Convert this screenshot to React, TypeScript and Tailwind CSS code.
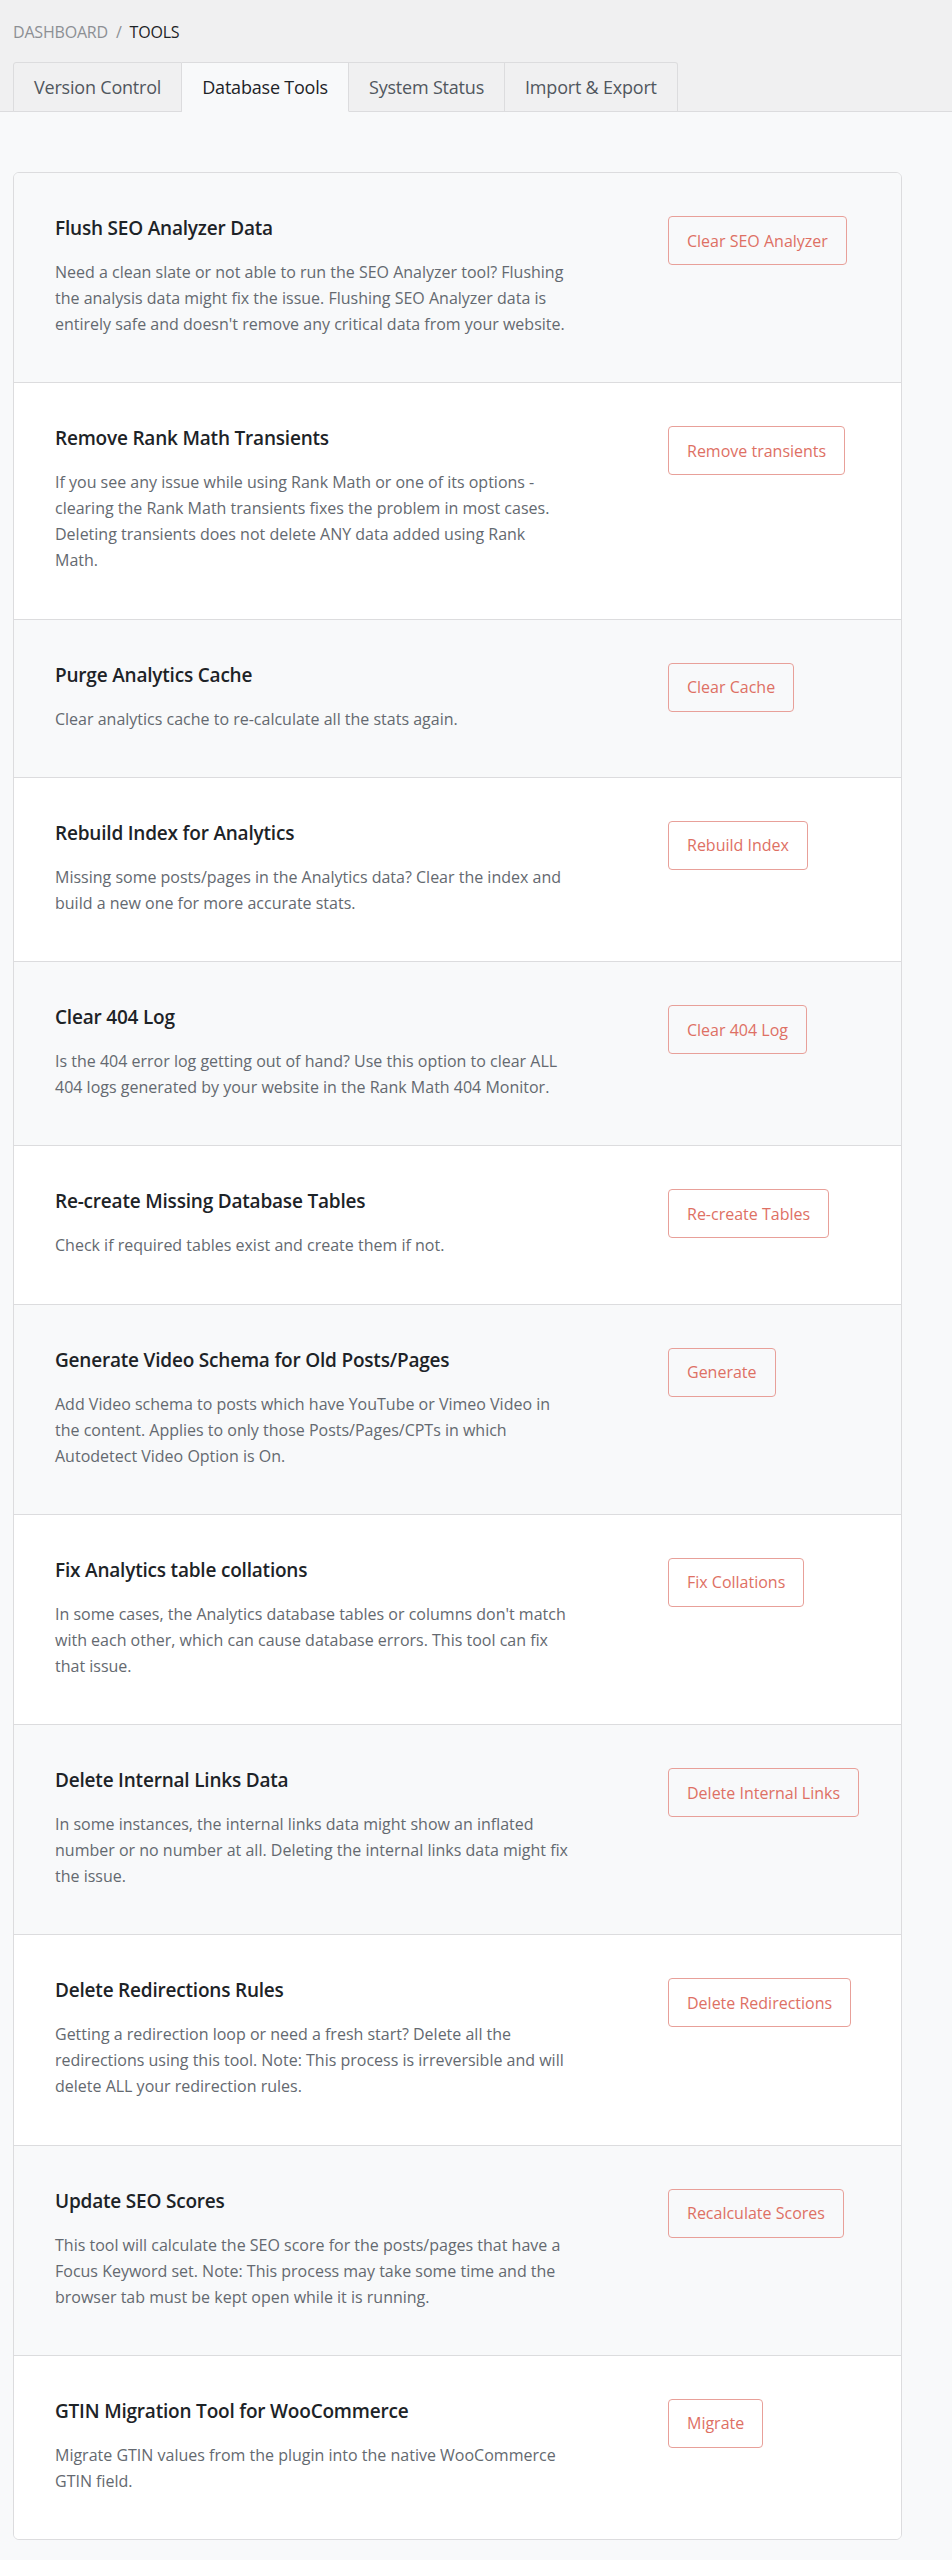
import React from "react";

type Tool = { title: string; lines: string[]; button: string };

const tools: Tool[] = [
  {
    title: "Flush SEO Analyzer Data",
    lines: [
      "Need a clean slate or not able to run the SEO Analyzer tool? Flushing",
      "the analysis data might fix the issue. Flushing SEO Analyzer data is",
      "entirely safe and doesn't remove any critical data from your website.",
    ],
    button: "Clear SEO Analyzer",
  },
  {
    title: "Remove Rank Math Transients",
    lines: [
      "If you see any issue while using Rank Math or one of its options -",
      "clearing the Rank Math transients fixes the problem in most cases.",
      "Deleting transients does not delete ANY data added using Rank",
      "Math.",
    ],
    button: "Remove transients",
  },
  {
    title: "Purge Analytics Cache",
    lines: ["Clear analytics cache to re-calculate all the stats again."],
    button: "Clear Cache",
  },
  {
    title: "Rebuild Index for Analytics",
    lines: [
      "Missing some posts/pages in the Analytics data? Clear the index and",
      "build a new one for more accurate stats.",
    ],
    button: "Rebuild Index",
  },
  {
    title: "Clear 404 Log",
    lines: [
      "Is the 404 error log getting out of hand? Use this option to clear ALL",
      "404 logs generated by your website in the Rank Math 404 Monitor.",
    ],
    button: "Clear 404 Log",
  },
  {
    title: "Re-create Missing Database Tables",
    lines: ["Check if required tables exist and create them if not."],
    button: "Re-create Tables",
  },
  {
    title: "Generate Video Schema for Old Posts/Pages",
    lines: [
      "Add Video schema to posts which have YouTube or Vimeo Video in",
      "the content. Applies to only those Posts/Pages/CPTs in which",
      "Autodetect Video Option is On.",
    ],
    button: "Generate",
  },
  {
    title: "Fix Analytics table collations",
    lines: [
      "In some cases, the Analytics database tables or columns don't match",
      "with each other, which can cause database errors. This tool can fix",
      "that issue.",
    ],
    button: "Fix Collations",
  },
  {
    title: "Delete Internal Links Data",
    lines: [
      "In some instances, the internal links data might show an inflated",
      "number or no number at all. Deleting the internal links data might fix",
      "the issue.",
    ],
    button: "Delete Internal Links",
  },
  {
    title: "Delete Redirections Rules",
    lines: [
      "Getting a redirection loop or need a fresh start? Delete all the",
      "redirections using this tool. Note: This process is irreversible and will",
      "delete ALL your redirection rules.",
    ],
    button: "Delete Redirections",
  },
  {
    title: "Update SEO Scores",
    lines: [
      "This tool will calculate the SEO score for the posts/pages that have a",
      "Focus Keyword set. Note: This process may take some time and the",
      "browser tab must be kept open while it is running.",
    ],
    button: "Recalculate Scores",
  },
  {
    title: "GTIN Migration Tool for WooCommerce",
    lines: [
      "Migrate GTIN values from the plugin into the native WooCommerce",
      "GTIN field.",
    ],
    button: "Migrate",
  },
];

const tabs = ["Version Control", "Database Tools", "System Status", "Import & Export"];

export default function App() {
  return (
    <div
      className="min-h-[2560px] bg-[#f8f9fa] text-[#1d2327]"
      style={{ fontFamily: '"Open Sans", "Noto Sans", sans-serif' }}
    >
      <div className="bg-[#f0f0f1] border-b border-[#dcdcde]">
        <div className="px-[13px] pt-[20px] text-[16px] leading-[24px] uppercase tracking-[-0.2px]">
          <span className="text-[#8c8f94]">Dashboard</span>
          <span className="text-[#8c8f94] mx-[8px]">/</span>
          <span className="text-[#1d2327]">Tools</span>
        </div>
        <div className="flex pl-[13px] mt-[18px] -mb-px">
          {tabs.map((t, i) => {
            const active = i === 1;
            return (
              <div
                key={t}
                className={
                  active
                    ? "h-[50px] flex items-center px-[20px] text-[18px] tracking-[-0.2px] bg-[#f8f9fa] border border-[#dcdcde] border-b-[#f8f9fa] border-l-0 text-[#1d2327]"
                    : i === 0
                    ? "h-[50px] flex items-center px-[20px] text-[18px] tracking-[-0.2px] bg-[#f0f0f1] border border-[#dcdcde] rounded-tl-[3px] text-[#50575e]"
                    : "h-[50px] flex items-center px-[20px] text-[18px] tracking-[-0.2px] bg-[#f0f0f1] border border-[#dcdcde] border-l-0 text-[#50575e] last:rounded-tr-[3px]"
                }
              >
                {t}
              </div>
            );
          })}
        </div>
      </div>

      <div className="pt-[60px] pl-[13px] pr-[50px] pb-[22px]">
        <div className="border border-[#dcdcde] rounded-[6px] overflow-hidden bg-white">
          {tools.map((tool, i) => (
            <div
              key={tool.title}
              className={
                (i % 2 === 0 ? "bg-[#f8f9fa] " : "bg-white ") +
                (i > 0 ? "border-t border-[#dcdcde] " : "") +
                "flex pl-[41px] pt-[42px] pb-[45.25px]"
              }
            >
              <div className="w-[613px] shrink-0">
                <h3 className="text-[19px] leading-[27px] font-semibold tracking-[-0.2px] text-[#1d2327]">
                  {tool.title}
                </h3>
                <p className="mt-[17px] text-[16px] leading-[26px] text-[#646970] whitespace-nowrap">
                  {tool.lines.map((l, j) => (
                    <React.Fragment key={j}>
                      {l}
                      {j < tool.lines.length - 1 && <br />}
                    </React.Fragment>
                  ))}
                </p>
              </div>
              <div className="pt-px">
                <button className="h-[49px] px-[18px] border border-[#e8a099] rounded-[4px] text-[16px] text-[#de7064] bg-transparent whitespace-nowrap">
                  {tool.button}
                </button>
              </div>
            </div>
          ))}
        </div>
      </div>
    </div>
  );
}
